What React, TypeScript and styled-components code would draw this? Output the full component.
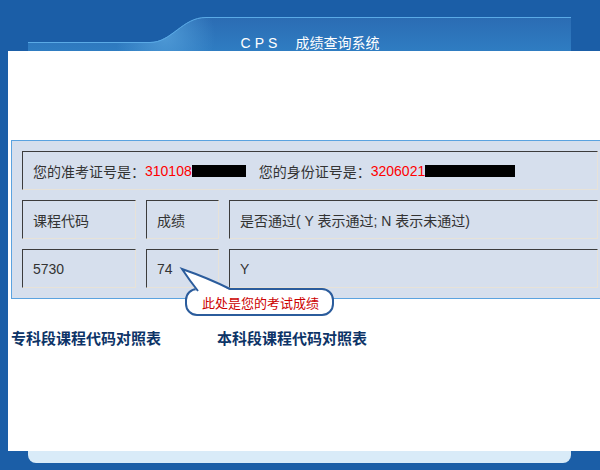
import React from "react";
import styled, { createGlobalStyle } from "styled-components";

const GlobalStyle = createGlobalStyle`
  html, body { margin: 0; padding: 0; }
  body {
    width: 600px;
    height: 470px;
    overflow: hidden;
    background: #1b5ea7;
    font-family: "Liberation Sans", "Noto Sans CJK SC", sans-serif;
  }
`;

const Page = styled.div`
  width: 600px;
  height: 470px;
  display: flex;
  flex-direction: column;
`;

const Header = styled.header`
  position: relative;
  height: 51px;
  box-sizing: border-box;
  padding: 35px 0 0 20px;
  display: flex;
  justify-content: center;
`;

const HeaderArt = styled.svg`
  position: absolute;
  left: 0;
  top: 0;
`;

const Title = styled.h1`
  position: relative;
  margin: 0;
  height: 16px;
  line-height: 16px;
  font-size: 14px;
  font-weight: normal;
  color: #ffffff;
  white-space: pre;
  display: flex;
  gap: 14px;
`;

const Brand = styled.span`
  letter-spacing: 4px;
`;

const Main = styled.main`
  margin-left: 8px;
  width: 592px;
  height: 400px;
  box-sizing: border-box;
  background: #ffffff;
  padding: 89px 0 0 3px;
`;

const Panel = styled.section`
  position: relative;
  width: 600px;
  box-sizing: border-box;
  border: 1px solid #5ba3e0;
  background: #d6dfed;
  padding: 10px;
`;

const Grid = styled.div`
  display: grid;
  grid-template-columns: 114px 73px 369px;
  grid-auto-rows: 39px;
  column-gap: 10px;
  row-gap: 10px;
`;

const Cell = styled.div<{ $full?: boolean }>`
  grid-column: ${(p) => (p.$full ? "1 / -1" : "auto")};
  box-sizing: border-box;
  border-top: 1px solid #3c3c3c;
  border-left: 1px solid #3c3c3c;
  border-right: 1px solid #e7e2d8;
  border-bottom: 1px solid #e7e2d8;
  padding-left: 10px;
  display: flex;
  align-items: center;
  font-size: 14px;
  color: #333333;
  white-space: pre;
`;

const Red = styled.span`
  color: #ff0000;
`;

const Mask = styled.span<{ $w: number }>`
  display: inline-block;
  width: ${(p) => p.$w}px;
  height: 12px;
  background: #000000;
`;

const Spacer = styled.span`
  display: inline-block;
  width: 13px;
`;

const Callout = styled.div`
  position: absolute;
  left: 173px;
  top: 147px;
  width: 149px;
  height: 28px;
  box-sizing: border-box;
  border: 2px solid #2b5c9c;
  border-radius: 12px;
  background: #ffffff;
  display: flex;
  align-items: center;
  justify-content: center;
  font-size: 13px;
  color: #cc0000;
  padding-left: 2px;
`;

const Tail = styled.svg`
  position: absolute;
  left: 166px;
  top: 124px;
`;

const Links = styled.nav`
  margin-top: 31px;
  display: flex;
`;

const LinkItem = styled.a<{ $w?: number }>`
  width: ${(p) => (p.$w ? `${p.$w}px` : "auto")};
  font-size: 15px;
  line-height: 18px;
  font-weight: bold;
  color: #0d3467;
  text-decoration: none;
`;

const Footer = styled.footer`
  margin-left: 28px;
  width: 543px;
  height: 12px;
  background: #d9ebf8;
  border-radius: 0 0 8px 8px;
`;

export default function App() {
  return (
    <>
      <GlobalStyle />
      <Page>
        <Header>
          <HeaderArt width="600" height="51" viewBox="0 0 600 51">
            <defs>
              <linearGradient id="band" x1="0" y1="0" x2="0" y2="1">
                <stop offset="0" stopColor="#2b6cb3" />
                <stop offset="1" stopColor="#2f7dc2" />
              </linearGradient>
              <radialGradient id="glow" cx="165" cy="36" r="50" gradientUnits="userSpaceOnUse">
                <stop offset="0" stopColor="#4f9ad6" stopOpacity="0.95" />
                <stop offset="1" stopColor="#4f9ad6" stopOpacity="0" />
              </radialGradient>
            </defs>
            <path d="M28,42 L150,42 C172,42 182,17 206,17 L571,17 L571,51 L28,51 Z" fill="url(#band)" />
            <path d="M28,42 L150,42 C172,42 182,17 206,17 L571,17 L571,51 L28,51 Z" fill="url(#glow)" />
            <path d="M28,42.5 L150,42.5 C172,42.5 182,17.5 206,17.5 L571,17.5" fill="none" stroke="#5aaae6" strokeWidth="1" />
          </HeaderArt>
          <Title>
            <Brand>CPS</Brand>
            <span>成绩查询系统</span>
          </Title>
        </Header>
        <Main>
          <Panel>
            <Grid>
              <Cell $full>
                您的准考证号是：<Red>310108</Red>
                <Mask $w={54} />
                <Spacer />
                您的身份证号是：<Red>3206021</Red>
                <Mask $w={90} />
              </Cell>
              <Cell>课程代码</Cell>
              <Cell>成绩</Cell>
              <Cell>是否通过( Y 表示通过; N 表示未通过)</Cell>
              <Cell>5730</Cell>
              <Cell>74</Cell>
              <Cell>Y</Cell>
            </Grid>
            <Callout>此处是您的考试成绩</Callout>
            <Tail width="56" height="30" viewBox="0 0 56 30">
              <path d="M20,28 Q12,16 4,4 Q30,13 52,25 L52,28 Z" fill="#ffffff" />
              <path d="M20,26 Q12,16 4,4 Q30,13 52,24" fill="none" stroke="#2b5c9c" strokeWidth="2" />
            </Tail>
          </Panel>
          <Links>
            <LinkItem href="#" $w={206}>专科段课程代码对照表</LinkItem>
            <LinkItem href="#">本科段课程代码对照表</LinkItem>
          </Links>
        </Main>
        <Footer />
      </Page>
    </>
  );
}
